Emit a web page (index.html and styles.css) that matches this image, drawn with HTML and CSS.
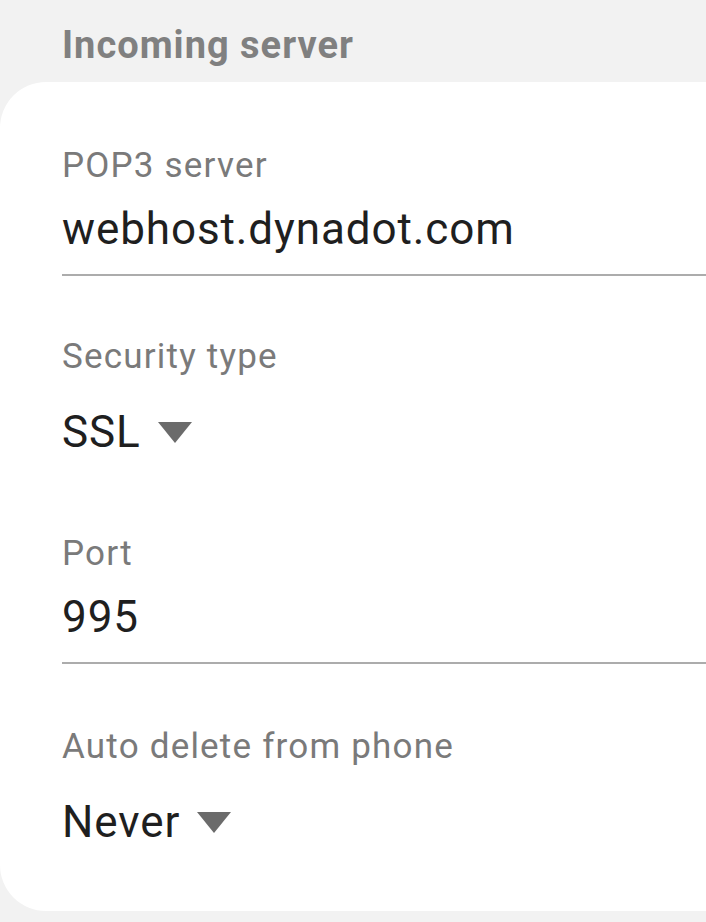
FILE: index.html
```html
<!DOCTYPE html>
<html lang="en">
<head>
    <meta charset="UTF-8">
    <meta name="viewport" content="width=device-width, initial-scale=1.0">
    <title>Incoming server</title>
    <link rel="stylesheet" href="styles.css">
</head>
<body>
    <h2 class="section-title">Incoming server</h2>

    <div class="card">
        <div class="field text-field first">
            <div class="field-label">POP3 server</div>
            <div class="field-value">webhost.dynadot.com</div>
        </div>

        <div class="field select-field">
            <div class="field-label">Security type</div>
            <div class="field-value">SSL <span class="arrow"></span></div>
        </div>

        <div class="field text-field">
            <div class="field-label">Port</div>
            <div class="field-value">995</div>
        </div>

        <div class="field select-field last">
            <div class="field-label">Auto delete from phone</div>
            <div class="field-value">Never <span class="arrow"></span></div>
        </div>
    </div>
</body>
</html>
```

FILE: styles.css
```css
body {
    font-family: Roboto, "Liberation Sans", sans-serif;
    margin: 0;
    background: #f2f2f2;
    overflow: hidden;
}
.section-title {
    margin: 0;
    padding: 23px 0 0 62px;
    font-size: 38px;
    line-height: 44px;
    font-weight: bold;
    letter-spacing: 1px;
    color: #808080;
}
/* Card */
.card {
    margin-top: 15px;
    background: #fff;
    border-radius: 46px 0 0 46px;
    padding: 64px 0 63px 62px;
}
.field-label {
    font-size: 35px;
    line-height: 40px;
    letter-spacing: 1.2px;
    color: #7a7a7a;
}
.field-value {
    font-size: 44px;
    line-height: 52px;
    letter-spacing: 0.9px;
    color: #1f1f1f;
}
.text-field {
    border-bottom: 2px solid #acacac;
}
.text-field .field-value {
    margin-top: 17px;
    padding-bottom: 19px;
}
.select-field .field-value {
    display: flex;
    align-items: center;
    gap: 17px;
    margin-top: 29px;
}
.field + .field {
    margin-top: 61px;
}
.select-field + .text-field {
    margin-top: 76px;
}
.text-field + .select-field.last {
    margin-top: 63px;
}
.arrow {
    width: 0;
    height: 0;
    border-left: 17px solid transparent;
    border-right: 17px solid transparent;
    border-top: 21px solid #6b6b6b;
}
```
